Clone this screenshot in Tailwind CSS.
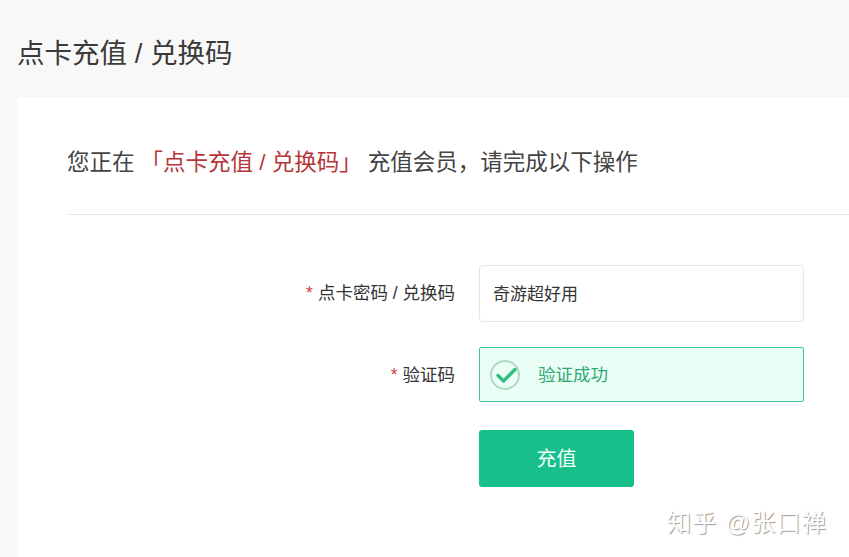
<!DOCTYPE html>
<html lang="zh">
<head>
<meta charset="utf-8">
<script src="https://cdn.jsdelivr.net/npm/@tailwindcss/browser@4"></script>
</head>
<body class="m-0 bg-[#f8f8f8]">
<div class="relative h-[557px] w-[849px] overflow-hidden bg-[#f8f8f8] font-['Liberation_Sans','Noto_Sans_CJK_SC',sans-serif] text-[#333]">
  <h1 class="h-[97px] pl-[17px] pt-[36px] text-[27.5px] leading-[36px] font-normal text-[#3a3a3a]">点卡充值 / 兑换码</h1>
  <main class="ml-[17px] h-[460px] rounded-tl-[4px] bg-white pl-[50px]">
    <div class="flex h-[118px] items-start border-b border-[#e8e8e8] pt-[50px] text-[22.5px] leading-[32px] text-[#444]">
      <span>您正在</span>
      <span class="ml-[6px] text-[#b5363a]">「点卡充值 / 兑换码」</span>
      <span class="ml-[6px]">充值会员，请完成以下操作</span>
    </div>
    <form class="pt-[50px]">
      <div class="flex items-center">
        <label class="w-[412px] pr-[24px] text-right text-[17.5px] text-[#333]"><span class="mr-[5px] text-[#c8473f]">*</span>点卡密码 / 兑换码</label>
        <div class="flex h-[57px] w-[325px] items-center rounded-[4px] border border-[#e6e6e6] bg-white pl-[13px] pt-[2px] text-[17px] text-[#333]">奇游超好用</div>
      </div>
      <div class="mt-[25px] flex items-center">
        <label class="w-[412px] pr-[24px] pt-[1px] text-right text-[17.5px] text-[#333]"><span class="mr-[5px] text-[#c8473f]">*</span>验证码</label>
        <div class="flex h-[55px] w-[325px] items-center rounded-[2px] border border-[#45c492] bg-[#ebfef5] pl-[9px] text-[17.5px] text-[#2fa876]">
          <svg width="32" height="32" viewBox="0 0 32 32" fill="none" class="shrink-0">
            <circle cx="16" cy="16" r="14" stroke="#b0d8c6" stroke-width="2"/>
            <path d="M9 16.5l5.5 5.5L26 10.5" stroke="#2fbf7f" stroke-width="3.4" stroke-linecap="round" stroke-linejoin="round"/>
          </svg>
          <span class="ml-[17px] mt-[2px]">验证成功</span>
        </div>
      </div>
      <div class="mt-[28px] ml-[412px]">
        <button type="button" class="h-[57px] w-[155px] rounded-[3px] bg-[#19bf8a] text-[20px] text-[#f2fffa]">充值</button>
      </div>
    </form>
  </main>
  <div class="absolute left-[667px] top-[507px] text-[24px] leading-[32px] tracking-[1.3px] text-white [text-shadow:1px_1px_1px_#9a9a9a]">知乎 @张口禅</div>
</div>
</body>
</html>
